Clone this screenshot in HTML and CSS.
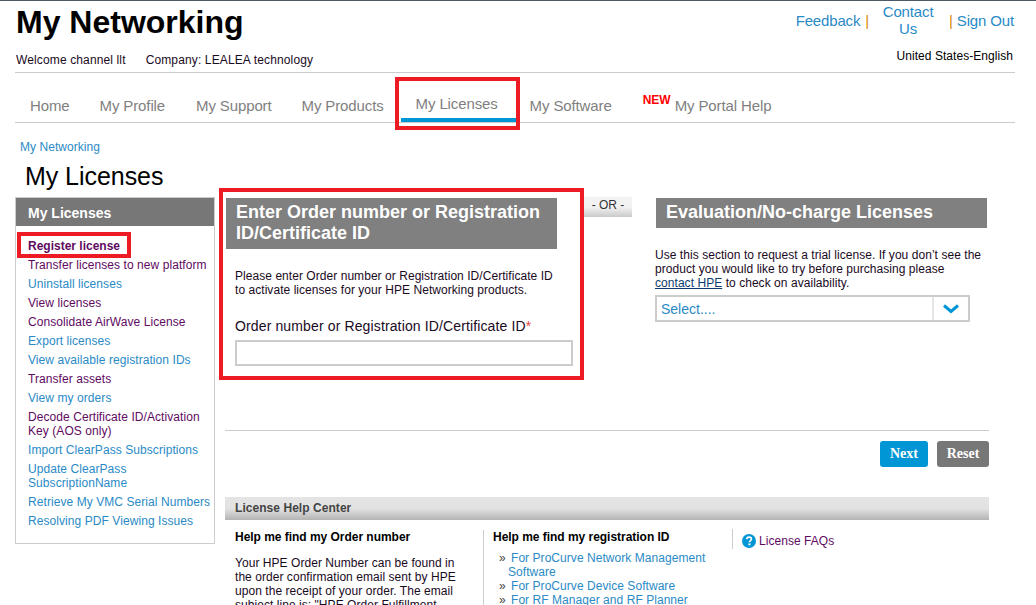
FILE: index.html
```html
<!DOCTYPE html>
<html lang="en">
<head>
<meta charset="utf-8">
<title>My Licenses</title>
<link rel="stylesheet" href="styles.css">
</head>
<body>
<div class="page">
  <header class="masthead">
    <div class="brand">
      <h1>My Networking</h1>
      <div class="welcome"><span>Welcome channel llt</span><span>Company: LEALEA technology</span></div>
    </div>
    <div class="utility">
      <div class="util-links">
        <a href="#">Feedback</a><span class="sep sep-a">|</span>
        <a href="#" class="contact">Contact Us</a><span class="sep sep-b">|</span>
        <a href="#" class="signout">Sign Out</a>
      </div>
      <div class="locale">United States-English</div>
    </div>
  </header>
  <nav class="tabs">
    <a href="#" class="tab t-home">Home</a>
    <a href="#" class="tab t-profile">My Profile</a>
    <a href="#" class="tab t-support">My Support</a>
    <a href="#" class="tab t-products">My Products</a>
    <a href="#" class="tab active">My Licenses</a>
    <a href="#" class="tab t-software">My Software</a>
    <a href="#" class="tab t-help"><b class="new">NEW</b> My Portal Help</a>
  </nav>
  <a href="#" class="crumb">My Networking</a>
  <h2 class="title">My Licenses</h2>
  <div class="main">
    <aside class="side">
      <div class="side-head">My Licenses</div>
      <ul class="side-list">
        <li><a href="#" class="v strong">Register license</a></li>
        <li><a href="#" class="v">Transfer licenses to new platform</a></li>
        <li><a href="#">Uninstall licenses</a></li>
        <li><a href="#" class="v">View licenses</a></li>
        <li><a href="#" class="v">Consolidate AirWave License</a></li>
        <li><a href="#">Export licenses</a></li>
        <li><a href="#">View available registration IDs</a></li>
        <li><a href="#" class="v">Transfer assets</a></li>
        <li><a href="#">View my orders</a></li>
        <li><a href="#" class="v">Decode Certificate ID/Activation Key (AOS only)</a></li>
        <li><a href="#">Import ClearPass Subscriptions</a></li>
        <li><a href="#">Update ClearPass SubscriptionName</a></li>
        <li><a href="#">Retrieve My VMC Serial Numbers</a></li>
        <li><a href="#">Resolving PDF Viewing Issues</a></li>
      </ul>
    </aside>
    <section class="content">
      <div class="forms">
        <div class="order">
          <h3 class="panel-head order-head">Enter Order number or Registration ID/Certificate ID</h3>
          <p class="order-text">Please enter Order number or Registration ID/Certificate ID to activate licenses for your HPE Networking products.</p>
          <label class="field-label" for="oid">Order number or Registration ID/Certificate ID<span class="req">*</span></label>
          <input id="oid" class="field" type="text">
        </div>
        <div class="or">- OR -</div>
        <div class="eval">
          <h3 class="panel-head eval-head">Evaluation/No-charge Licenses</h3>
          <p class="eval-text">Use this section to request a trial license. If you don’t see the product you would like to try before purchasing please <a href="#">contact HPE</a> to check on availability.</p>
          <div class="select">
            <span class="select-text">Select....</span>
            <span class="select-btn"><svg width="18" height="10" viewBox="0 0 18 10"><path d="M2 1.5 9 7.5 16 1.5" fill="none" stroke="#0096d6" stroke-width="3"/></svg></span>
          </div>
        </div>
      </div>
      <div class="actions">
        <button class="btn next" type="button">Next</button>
        <button class="btn reset" type="button">Reset</button>
      </div>
      <div class="help">
        <div class="help-head">License Help Center</div>
        <div class="help-cols">
          <div class="hc hc1">
            <h4>Help me find my Order number</h4>
            <p>Your HPE Order Number can be found in the order confirmation email sent by HPE upon the receipt of your order. The email subject line is: "HPE Order Fulfillment</p>
          </div>
          <div class="hc hc2">
            <h4>Help me find my registration ID</h4>
            <ul class="reg-list">
              <li><a href="#">For ProCurve Network Management Software</a></li>
              <li><a href="#">For ProCurve Device Software</a></li>
              <li><a href="#">For RF Manager and RF Planner</a></li>
            </ul>
          </div>
          <div class="hc3">
            <svg class="q" width="14" height="14" viewBox="0 0 14 14"><circle cx="7" cy="7" r="7" fill="#0096d6"/><path d="M4.7 5.3C4.8 3.9 5.8 3.2 7.1 3.2 8.5 3.2 9.4 4 9.4 5.1 9.4 6 8.9 6.4 8.2 6.9 7.6 7.3 7.4 7.6 7.4 8.3" fill="none" stroke="#fff" stroke-width="1.7"/><rect x="6.4" y="9.4" width="2" height="1.9" fill="#fff"/></svg>
            <a href="#" class="v">License FAQs</a>
          </div>
        </div>
      </div>
    </section>
  </div>
  <div class="mark mark-tab"></div>
  <div class="mark mark-side"></div>
  <div class="mark mark-order"></div>
</div>
</body>
</html>
```
FILE: styles.css
```css
html, body { margin: 0; padding: 0; height: 605px; overflow: hidden; background: #fff; }
body { font-family: "Liberation Sans", Arial, sans-serif; font-size: 12px; letter-spacing: 0.05px; color: #1a0a1e; border-top: 1px solid #4a5a66; box-sizing: border-box; }
a { color: #2a8ac6; text-decoration: none; }
a.v { color: #5f0a5f; }
h1, h2, h3, h4, p, ul { margin: 0; padding: 0; }
ul { list-style: none; }

.page { position: relative; width: 1000px; margin-left: 15px; height: 604px; overflow: hidden; }

.masthead { display: flex; justify-content: space-between; height: 71px; border-bottom: 1px solid #ccc; }
.brand h1 { font-size: 32px; line-height: 37px; font-weight: bold; color: #000; margin: 3px 0 0 1px; letter-spacing: 0; }
.welcome { display: flex; gap: 20px; margin: 12px 0 0 1px; line-height: 14px; letter-spacing: 0.13px; }
.utility { width: 240px; }
.util-links { display: flex; align-items: center; justify-content: flex-end; height: 39px; padding-right: 1px; font-size: 15px; line-height: 17px; letter-spacing: -0.15px; }
.contact { width: 60px; text-align: center; margin: 0 0 0 9px; padding-bottom: 1px; }
.sep { color: #d38a0a; font-size: 15px; }
.sep-a { margin-left: 5px; }
.sep-b { margin: 0 4px 0 11px; }
.locale { text-align: right; line-height: 14px; margin-top: 9px; color: #000; padding-right: 2px; }

.tabs { display: flex; height: 49px; border-bottom: 1px solid #ccc; font-size: 15px; line-height: 17px; letter-spacing: -0.12px; }
.tab { color: #7f7f7f; padding-top: 24px; }
.t-home { margin-left: 15px; }
.t-profile { margin-left: 30px; }
.t-support { margin-left: 31px; }
.t-products { margin-left: 30px; }
.active { margin-left: 17px; width: 115px; padding: 22px 0 0 15px; box-sizing: border-box; height: 49px; border-bottom: 4px solid #0096d6; }
.t-software { margin-left: 14px; }
.t-help { margin-left: 31px; }
.new { color: #f00; font-size: 12px; line-height: 0; vertical-align: 7px; letter-spacing: 0; }

.crumb { display: block; margin: 17px 0 0 5px; line-height: 14px; }
.title { font-size: 25px; font-weight: normal; line-height: 28px; color: #000; margin: 8px 0 0 10px; letter-spacing: -0.05px; }

.main { display: flex; margin-top: 7px; }
.side { width: 200px; height: 347px; box-sizing: border-box; border: 1px solid #ccc; flex: none; }
.side-head { height: 28px; background: #777; color: #fff; font-size: 14px; font-weight: bold; line-height: 30px; padding-left: 12px; letter-spacing: 0; }
.side-list { padding: 13px 0 0 12px; letter-spacing: 0.07px; }
.side-list li { line-height: 14px; margin-bottom: 5px; }
.side-list li a { display: block; }
.strong { font-weight: bold; letter-spacing: 0; }

.content { width: 764px; margin-left: 10px; flex: none; }
.forms { display: flex; height: 233px; border-bottom: 1px solid #ccc; }
.order { width: 359px; flex: none; padding-left: 1px; box-sizing: border-box; padding-top: 1px; }
.panel-head { background: #808080; color: #fff; font-size: 18px; font-weight: bold; line-height: 21px; padding: 4px 10px 5px; letter-spacing: 0; }
.order-head { width: 331px; box-sizing: border-box; padding-right: 0; }
.order-text { margin: 20px 0 0 9px; line-height: 14px; width: 322px; }
.field-label { display: block; margin: 21px 0 0 9px; font-size: 14px; line-height: 16px; letter-spacing: 0.13px; }
.req { color: #e44; }
.field { display: block; margin: 6px 0 0 9px; width: 338px; height: 26px; box-sizing: border-box; border: 2px solid #ccc; background: #fff; padding: 0; }
.or { width: 48px; height: 20px; flex: none; text-align: center; line-height: 16px; color: #333; letter-spacing: 0; background: linear-gradient(#f2f2f2, #f2f2f2 50%, #c9c9c9); }
.eval { margin-left: 23px; width: 333px; padding-top: 1px; }
.eval-head { width: 331px; margin-left: 1px; box-sizing: border-box; height: 30px; }
.eval-text { margin-top: 20px; line-height: 14px; width: 331px; }
.eval-text a { color: #0b3d6e; text-decoration: underline; }
.select { display: flex; width: 315px; height: 27px; box-sizing: border-box; border: 2px solid #ccc; margin-top: 5px; }
.select-text { flex: 1; font-size: 14px; color: #2a8ac6; line-height: 25px; padding-left: 4px; letter-spacing: 0; }
.select-btn { width: 36px; box-sizing: border-box; border-left: 2px solid #e6e6e6; display: flex; align-items: center; justify-content: center; }

.actions { display: flex; justify-content: flex-end; gap: 9px; margin-top: 10px; height: 26px; }
.btn { border: 0; border-radius: 3px; color: #fff; font-family: "Liberation Serif", serif; font-weight: bold; font-size: 14px; height: 26px; padding: 0; }
.next { width: 48px; background: #0096d6; }
.reset { width: 52px; background: #777; }

.help { margin-top: 30px; }
.help-head { height: 23px; line-height: 22px; padding-left: 10px; font-weight: bold; color: #444; background: linear-gradient(#e4e4e4, #e2e2e2 50%, #b4b4b4); }
.help-cols { display: flex; margin-top: 10px; align-items: flex-start; }
.hc h4 { font-size: 12px; line-height: 14px; color: #000; letter-spacing: -0.03px; }
.hc1 { width: 258px; box-sizing: border-box; padding-left: 10px; padding-right: 20px; }
.hc1 p { margin-top: 12px; line-height: 14px; }
.hc2 { width: 249px; height: 100px; box-sizing: border-box; border-left: 1px solid #ccc; padding-left: 9px; }
.reg-list { margin-top: 7px; padding-left: 15px; line-height: 14px; }
.reg-list li { position: relative; text-indent: 3px; }
.reg-list li::before { content: "»"; position: absolute; left: -9px; top: 0; text-indent: 0; color: #444; }
.hc3 { display: flex; align-items: center; gap: 3px; height: 20px; padding-left: 9px; border-left: 1px solid #ccc; margin-top: -1px; }
.q { flex: none; margin-top: 4px; }
.hc3 a { margin-top: 4px; }

.mark { position: absolute; border: 4px solid #ed1c24; box-sizing: border-box; pointer-events: none; }
.mark-tab { left: 380px; top: 76px; width: 125px; height: 53px; }
.mark-side { left: 2px; top: 231px; width: 114px; height: 26px; }
.mark-order { left: 204px; top: 187px; width: 365px; height: 192px; }
```
